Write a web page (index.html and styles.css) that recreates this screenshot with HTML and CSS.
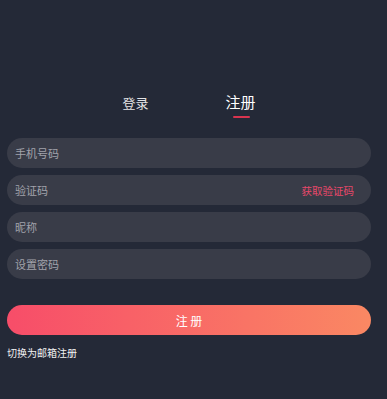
FILE: index.html
```html
<!DOCTYPE html>
<html lang="zh-CN">
<head>
<meta charset="utf-8">
<title>注册</title>
<link rel="stylesheet" href="styles.css">
</head>
<body>
<div class="page">
  <div class="tabs">
    <div class="tab">登录</div>
    <div class="tab active">注册</div>
  </div>
  <div class="form">
    <div class="field"><span class="ph">手机号码</span></div>
    <div class="field"><span class="ph">验证码</span><span class="code">获取验证码</span></div>
    <div class="field"><span class="ph">昵称</span></div>
    <div class="field"><span class="ph">设置密码</span></div>
  </div>
  <div class="submit">注 册</div>
  <div class="switch">切换为邮箱注册</div>
</div>
</body>
</html>
```

FILE: styles.css
```css
html, body {
  margin: 0;
  padding: 0;
  background: #242937;
  height: 100%;
}
body {
  font-family: "Noto Sans CJK SC", "Noto Sans", sans-serif;
  color: #ffffff;
}
.page {
  width: 364px;
  margin-left: 7px;
  padding-top: 92px;
}
.tabs {
  display: flex;
  justify-content: center;
  align-items: baseline;
  gap: 77px;
}
.tab {
  font-size: 13px;
  line-height: 20px;
  color: #e4e4e6;
  position: relative;
}
.tab.active {
  font-size: 15px;
  color: #ffffff;
}
.tab.active::after {
  content: "";
  position: absolute;
  left: 50%;
  bottom: -6px;
  width: 17px;
  height: 2px;
  margin-left: -8px;
  background: #d9344f;
  border-radius: 1px;
}
.form {
  margin-top: 25px;
  display: flex;
  flex-direction: column;
  gap: 7px;
}
.field {
  height: 30px;
  border-radius: 15px;
  background: #393c48;
  display: flex;
  align-items: center;
  justify-content: space-between;
  padding: 0 17px 0 8px;
  font-size: 11px;
}
.ph {
  color: #a2a3ab;
}
.code {
  color: #e8486a;
  font-size: 10.5px;
}
.submit {
  margin-top: 26px;
  height: 30px;
  border-radius: 15px;
  background: linear-gradient(90deg, #f74d69 0%, #fa8863 100%);
  display: flex;
  align-items: center;
  justify-content: center;
  font-size: 12px;
  color: #ffffff;
}
.switch {
  margin-top: 11px;
  font-size: 10px;
  line-height: 14px;
  color: #f2f2f2;
}
```
